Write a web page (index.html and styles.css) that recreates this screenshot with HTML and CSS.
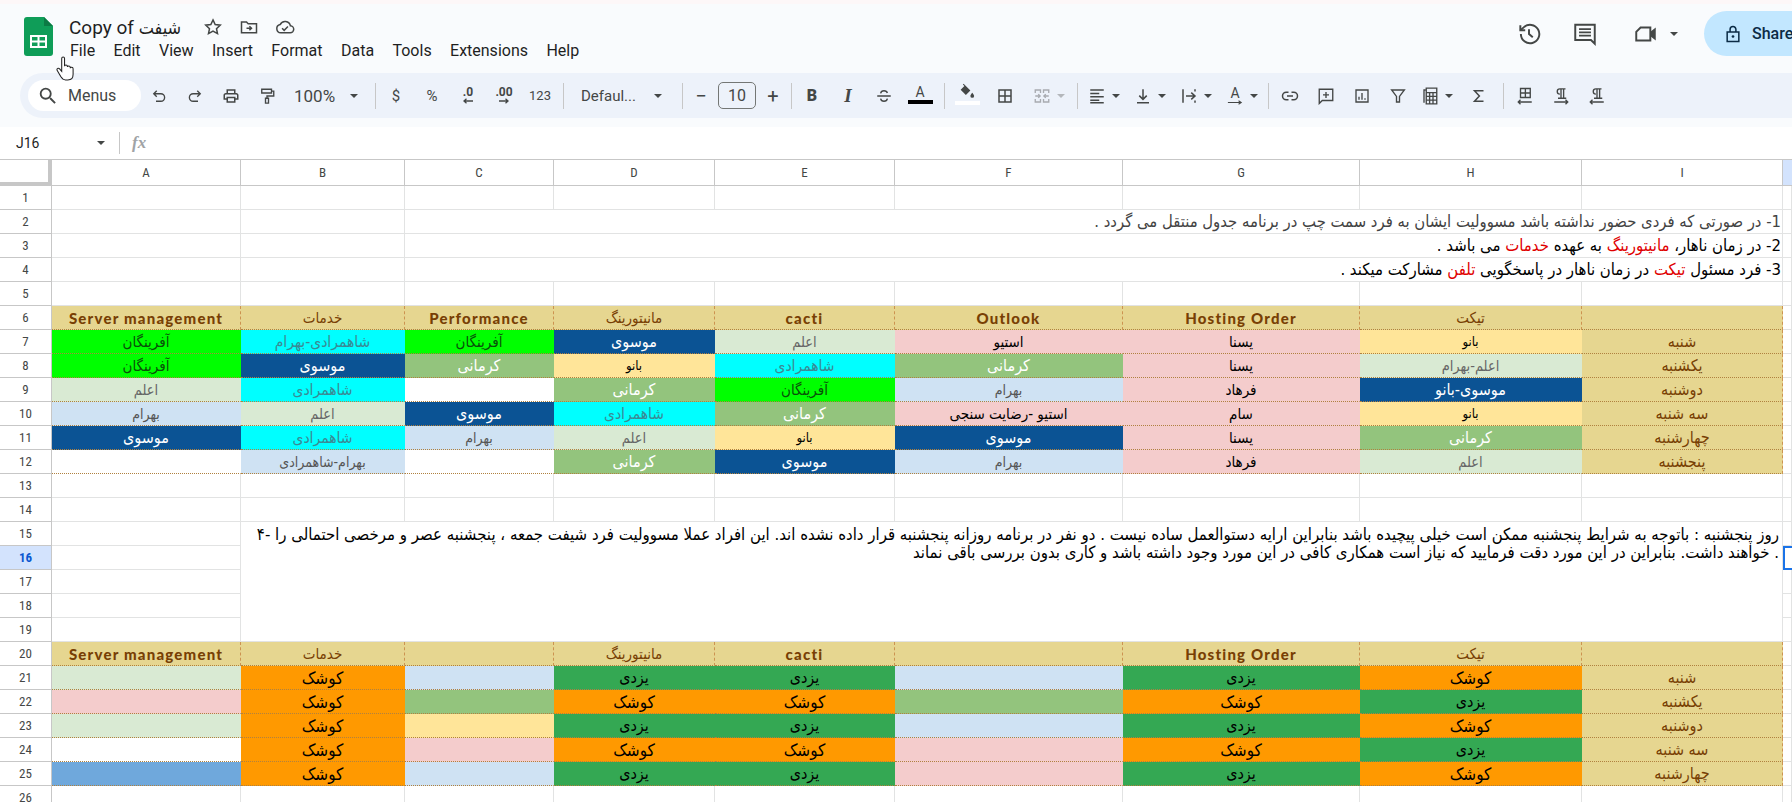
FILE: index.html
```html
<!DOCTYPE html>
<html lang="fa">
<head>
  <meta charset="UTF-8" />
  <title>Copy of شیفت</title>
  <link rel="stylesheet" href="styles.css">
</head>
<body>
  <!-- HEADER -->
  <header class="topbar">
    <svg class="logo" viewBox="0 0 29 39"><path d="M3 0h17l9 9v27a3 3 0 0 1-3 3H3a3 3 0 0 1-3-3V3a3 3 0 0 1 3-3z" fill="#0f9d58"/><path d="M20 0l9 9h-9z" fill="#0b7a44"/><path d="M6 18h17v13H6zm2 2v3.500h5.500V20zm7.500 0v3.500H21V20zM8 25.500V29h5.500v-3.500zm7.500 0V29H21v-3.500z" fill="#fff" fill-rule="evenodd"/></svg>
    <div class="doc-info">
      <div class="title-row">
        <span class="doc-title">Copy of <span class="fa">شیفت</span></span>
        <svg class="ic title-ic" viewBox="0 0 24 24"><path class="st" d="M12 3.500l2.600 5.600 6.100.7-4.500 4.200 1.200 6-5.400-3-5.400 3 1.200-6-4.500-4.200 6.100-.7z"/></svg>
        <svg class="ic title-ic" viewBox="0 0 24 24"><path class="st" d="M3 6h6l2 2h10v11H3z"/><path class="st" d="M9 13.500h6M12.500 11l2.500 2.500-2.500 2.500"/></svg>
        <svg class="ic title-ic" viewBox="0 0 24 24"><path class="st" d="M7 19a5 5 0 0 1-.8-9.900 6.500 6.500 0 0 1 12.300 1.500A4.200 4.200 0 0 1 18 19z"/><path class="st" d="M8.500 13.500l2.500 2.500 4.500-4.500"/></svg>
      </div>
      <nav class="menu">
        <span>File</span><span>Edit</span><span>View</span><span>Insert</span><span>Format</span><span>Data</span><span>Tools</span><span>Extensions</span><span>Help</span>
      </nav>
    </div>
    <div class="top-actions">
      <svg class="ic top-ic" viewBox="0 0 24 24"><path class="st" d="M4.500 12a8.500 8.500 0 1 0 2.600-6.100L4 8.500"/><path class="st" d="M4 4v4.500h4.500M12 7.500V12l3.500 3"/></svg>
      <svg class="ic top-ic cm" viewBox="0 0 24 24"><path class="st" d="M3 3.500h18V21l-3.500-3.500H3z"/><path class="st" d="M6.500 7.500h11M6.500 10.500h11M6.500 13.500h11"/></svg>
      <span class="meet">
        <svg class="ic top-ic" viewBox="0 0 24 24"><path class="st" d="M7 6h9v12H3v-8z"/><path d="M16 10l5-4v12l-5-4z" fill="#444746"/></svg>
        <i class="caret"></i>
      </span>
      <div class="share">
        <svg class="ic lock" viewBox="0 0 24 24"><path class="st" d="M5 9.500h14V21H5zM8.500 9.500V6.500a3.500 3.500 0 0 1 7 0v3"/><circle cx="12" cy="15" r="1.600" fill="#0b2b45"/></svg>
        <span>Share</span>
      </div>
    </div>
  </header>

  <!-- TOOLBAR -->
  <div class="toolbar">
    <div class="menus-search">
      <svg class="ic" viewBox="0 0 24 24"><path d="M15.500 14h-.79l-.28-.27A6.470 6.470 0 0 0 16 9.500 6.500 6.500 0 1 0 9.500 16c1.610 0 3.090-.59 4.230-1.570l.27.28v.79l5 4.990L20.490 19l-4.990-5zm-6 0C7.010 14 5 11.990 5 9.500S7.010 5 9.500 5 14 7.010 14 9.500 11.990 14 9.500 14z"/></svg>
      <span>Menus</span>
    </div>
    <span class="tb"><svg class="ic" viewBox="0 0 24 24"><path class="st" d="M9 5L5 9l4 4M5 9h9.500a5 5 0 0 1 0 10H8"/></svg></span>
    <span class="tb"><svg class="ic" viewBox="0 0 24 24"><path class="st" d="M15 5l4 4-4 4M19 9H9.500a5 5 0 0 0 0 10H16"/></svg></span>
    <span class="tb"><svg class="ic" viewBox="0 0 24 24"><path d="M19 8h-1V3H6v5H5c-1.660 0-3 1.340-3 3v6h4v4h12v-4h4v-6c0-1.660-1.340-3-3-3zM8 5h8v3H8V5zm8 12v2H8v-4h8v2zm2-2v-2H6v2H4v-4c0-.55.45-1 1-1h14c.55 0 1 .45 1 1v4h-2z"/></svg></span>
    <span class="tb"><svg class="ic" viewBox="0 0 24 24"><path class="st" d="M5 3h13v5H5zM18 5.500h3V12h-9v3"/><path class="st" d="M10 15h4v6.500h-4z"/></svg></span>
    <span class="zoom-box"><span>100%</span><i class="caret"></i></span>
    <i class="sep sep-a"></i>
    <span class="tb txt">$</span>
    <span class="tb txt">%</span>
    <span class="tb dec">.0<svg viewBox="0 0 12 6"><path class="st" d="M11 3H2M4.500 .8L2 3l2.500 2.200"/></svg></span>
    <span class="tb dec">.00<svg viewBox="0 0 12 6"><path class="st" d="M1 3h9M7.500 .8L10 3 7.500 5.200"/></svg></span>
    <span class="tb txt small">123</span>
    <i class="sep sep-b"></i>
    <span class="font-box"><span>Defaul...</span><i class="caret"></i></span>
    <i class="sep sep-c"></i>
    <span class="tb step">−</span>
    <span class="size-box">10</span>
    <span class="tb step">+</span>
    <i class="sep sep-d"></i>
    <span class="tb fmt"><b>B</b></span>
    <span class="tb fmt"><b class="it">I</b></span>
    <span class="tb"><svg class="ic" viewBox="0 0 24 24"><path class="st" d="M3 12h18M7.500 8.500C8 6 10 5 12 5s4 1 4.500 3M7.500 15.500C8 18 10 19 12 19s4-1 4.500-3.500"/></svg></span>
    <span class="tb colr"><span class="colr-a">A</span><i class="bar"></i></span>
    <i class="sep sep-e"></i>
    <span class="tb wide colr"><svg class="ic fill-ic" viewBox="0 0 24 24"><path d="M7.500 1l9 9-6 6-7-7 5-5-2-2zM19 13s2.500 2.800 2.500 4.300a2.500 2.500 0 0 1-5 0C16.500 15.800 19 13 19 13z"/></svg><i class="bar white"></i></span>
    <span class="tb wide"><svg class="ic" viewBox="0 0 24 24"><path class="st thick" d="M4 4h16v16H4zM12 4v16M4 12h16"/></svg></span>
    <span class="tb merge"><svg class="ic" viewBox="0 0 24 24"><path class="st dim" d="M3 8V4h7v4M3 16v4h7v-4M14 8V4h7v4M14 16v4h7v-4M3 12h6M7 9.500L9.500 12 7 14.500M21 12h-6M17 9.500L14.500 12l2.500 2.500"/></svg><i class="caret dim-caret"></i></span>
    <i class="sep sep-f"></i>
    <span class="tb cr"><svg class="ic" viewBox="0 0 24 24"><path class="st thick" d="M3 4h18M3 8.500h12M3 13h18M3 17.500h12M3 21h18"/></svg><i class="caret"></i></span>
    <span class="tb cr"><svg class="ic" viewBox="0 0 24 24"><path class="st thick" d="M12 3v13M7 11.500l5 5 5-5M4 21h16"/></svg><i class="caret"></i></span>
    <span class="tb cr"><svg class="ic" viewBox="0 0 24 24"><path class="st thick" d="M4 3v18M20 3v3M20 18v3M8 12h12M15 7.500l5 4.500-5 4.500"/></svg><i class="caret"></i></span>
    <span class="tb cr"><span class="rot">A<svg viewBox="0 0 18 5"><path class="st" d="M1 2.500h15M13 .5l3 2-3 2"/></svg></span><i class="caret"></i></span>
    <i class="sep sep-g"></i>
    <span class="tb"><svg class="ic" viewBox="0 0 24 24"><path class="st thick" d="M10 7H7a5 5 0 0 0 0 10h3M14 7h3a5 5 0 0 1 0 10h-3M8 12h8"/></svg></span>
    <span class="tb"><svg class="ic" viewBox="0 0 24 24"><path class="st" d="M3 3h18v15H7l-4 4z"/><path class="st" d="M12 6.500v8M8 10.500h8"/></svg></span>
    <span class="tb"><svg class="ic" viewBox="0 0 24 24"><path class="st" d="M4 4h16v16H4zM8 17v-4M12 17V8M16 17v-2"/></svg></span>
    <span class="tb"><svg class="ic" viewBox="0 0 24 24"><path class="st" d="M3.500 4h17L14 12.500V20h-4v-7.500z"/></svg></span>
    <span class="tb calc"><svg class="ic" viewBox="0 0 24 24"><path class="st" d="M4 21V4h2M7 1.500h14V22.500H7zM7 7.500h14M7 12.500h14M7 17.500h14M11.500 7.500v15M16 7.500v15" /></svg><i class="caret"></i></span>
    <span class="tb"><svg class="ic" viewBox="0 0 24 24"><path class="st thick" d="M18 5H6l6.500 7L6 19h12"/></svg></span>
    <i class="sep sep-h"></i>
    <span class="tb"><svg class="ic" viewBox="0 0 24 24"><path class="st" d="M6 2h13v12H6zM12.500 2v12M6 8h13M21 20H3M6 17l-3 3 3 3"/></svg></span>
    <span class="tb"><svg class="ic" viewBox="0 0 24 24"><path class="st" d="M10.500 9.500a3.500 3.500 0 0 1 0-7H18M12 2.500V15M15.500 2.500V15M8 15h11M3 20h18M18 17l3 3-3 3"/></svg></span>
    <span class="tb"><svg class="ic" viewBox="0 0 24 24"><path class="st" d="M10.500 9.500a3.500 3.500 0 0 1 0-7H18M12 2.500V15M15.500 2.500V15M8 15h11M21 20H3M6 17l-3 3 3 3"/></svg></span>
  </div>

  <!-- FORMULA BAR -->
  <div class="formula-bar">
    <span class="name-box">J16</span>
    <i class="caret"></i>
    <i class="sep sep-fx"></i>
    <span class="fx">fx</span>
  </div>

  <!-- SHEET -->
  <div class="sheet">
    <div class="corner"></div>
    <div class="col">A</div><div class="col">B</div><div class="col">C</div><div class="col">D</div><div class="col">E</div><div class="col">F</div><div class="col">G</div><div class="col">H</div><div class="col">I</div><div class="col sel-col"></div>

    <div class="row">1</div><div class="c"></div><div class="c"></div><div class="c"></div><div class="c"></div><div class="c"></div><div class="c"></div><div class="c"></div><div class="c"></div><div class="c"></div><div class="c"></div>

    <div class="row">2</div><div class="c"></div><div class="c"></div>
    <div class="c note gray" dir="rtl"><span>1- در صورتی که فردی حضور نداشته باشد مسوولیت ایشان به فرد سمت چپ در برنامه جدول منتقل می گردد .</span></div>
    <div class="c"></div>

    <div class="row">3</div><div class="c"></div><div class="c"></div>
    <div class="c note" dir="rtl"><span>2- در زمان ناهار، <span class="red">مانیتورینگ</span> به عهده <span class="red">خدمات</span> می باشد .</span></div>
    <div class="c"></div>

    <div class="row">4</div><div class="c"></div><div class="c"></div>
    <div class="c note" dir="rtl"><span>3- فرد مسئول <span class="red">تیکت</span> در زمان ناهار در پاسخگویی <span class="red">تلفن</span> مشارکت میکند .</span></div>
    <div class="c"></div>

    <div class="row">5</div><div class="c"></div><div class="c"></div><div class="c"></div><div class="c"></div><div class="c"></div><div class="c"></div><div class="c"></div><div class="c"></div><div class="c"></div><div class="c"></div>

    <div class="row">6</div>
    <div class="d hd en">Server management</div><div class="d hd">خدمات</div><div class="d hd en">Performance</div><div class="d hd">مانیتورینگ</div><div class="d hd en">cacti</div><div class="d hd en">Outlook</div><div class="d hd en">Hosting Order</div><div class="d hd">تیکت</div><div class="d hd"></div><div class="c"></div>

    <div class="row">7</div>
    <div class="d lime">آفرینگان</div><div class="d cyan">شاهمرادی-بهرام</div><div class="d lime">آفرینگان</div><div class="d navy">موسوی</div><div class="d sage">اعلم</div><div class="d pink">استیو</div><div class="d pink">یسنا</div><div class="d sand">بانو</div><div class="d hd day">شنبه</div><div class="c"></div>

    <div class="row">8</div>
    <div class="d lime">آفرینگان</div><div class="d navy">موسوی</div><div class="d leaf">کرمانی</div><div class="d sand">بانو</div><div class="d cyan">شاهمرادی</div><div class="d leaf">کرمانی</div><div class="d pink">یسنا</div><div class="d sage">اعلم-بهرام</div><div class="d hd day">یکشنبه</div><div class="c"></div>

    <div class="row">9</div>
    <div class="d sage">اعلم</div><div class="d cyan">شاهمرادی</div><div class="d"></div><div class="d leaf">کرمانی</div><div class="d lime">آفرینگان</div><div class="d sky">بهرام</div><div class="d pink">فرهاد</div><div class="d navy">موسوی-بانو</div><div class="d hd day">دوشنبه</div><div class="c"></div>

    <div class="row">10</div>
    <div class="d sky">بهرام</div><div class="d sage">اعلم</div><div class="d navy">موسوی</div><div class="d cyan">شاهمرادی</div><div class="d leaf">کرمانی</div><div class="d pink">استیو -رضایت سنجی</div><div class="d pink">سام</div><div class="d sand">بانو</div><div class="d hd day">سه شنبه</div><div class="c"></div>

    <div class="row">11</div>
    <div class="d navy">موسوی</div><div class="d cyan">شاهمرادی</div><div class="d sky">بهرام</div><div class="d sage">اعلم</div><div class="d sand">بانو</div><div class="d navy">موسوی</div><div class="d pink">یسنا</div><div class="d leaf">کرمانی</div><div class="d hd day">چهارشنبه</div><div class="c"></div>

    <div class="row">12</div>
    <div class="d"></div><div class="d sky">بهرام-شاهمرادی</div><div class="d"></div><div class="d leaf">کرمانی</div><div class="d navy">موسوی</div><div class="d sky">بهرام</div><div class="d pink">فرهاد</div><div class="d sage">اعلم</div><div class="d hd day">پنجشنبه</div><div class="c"></div>

    <div class="row">13</div><div class="c"></div><div class="c"></div><div class="c"></div><div class="c"></div><div class="c"></div><div class="c"></div><div class="c"></div><div class="c"></div><div class="c"></div><div class="c"></div>
    <div class="row">14</div><div class="c"></div><div class="c"></div><div class="c"></div><div class="c"></div><div class="c"></div><div class="c"></div><div class="c"></div><div class="c"></div><div class="c"></div><div class="c"></div>

    <div class="row">15</div><div class="c"></div>
    <div class="c long-note" dir="rtl">
      <div>روز پنجشنبه : باتوجه به شرایط پنجشنبه ممکن است خیلی پیچیده باشد بنابراین ارایه دستوالعمل ساده نیست . دو نفر در برنامه روزانه پنجشنبه قرار داده نشده اند. این افراد عملا مسوولیت فرد شیفت جمعه ، پنجشنبه عصر و مرخصی احتمالی را -۴</div>
      <div>. خواهند داشت. بنابراین در این مورد دقت فرمایید که نیاز است همکاری کافی در این مورد وجود داشته باشد و کاری بدون بررسی باقی نماند</div>
    </div>
    <div class="c"></div>
    <div class="row sel-row">16</div><div class="c"></div><div class="c sel-cell"></div>
    <div class="row">17</div><div class="c"></div><div class="c"></div>
    <div class="row">18</div><div class="c"></div><div class="c"></div>
    <div class="row">19</div><div class="c"></div><div class="c"></div>

    <div class="row">20</div>
    <div class="d hd en">Server management</div><div class="d hd">خدمات</div><div class="d hd"></div><div class="d hd">مانیتورینگ</div><div class="d hd en">cacti</div><div class="d hd"></div><div class="d hd en">Hosting Order</div><div class="d hd">تیکت</div><div class="d hd"></div><div class="c"></div>

    <div class="row">21</div>
    <div class="d sage"></div><div class="d orange">کوشک</div><div class="d sky"></div><div class="d green">یزدی</div><div class="d green">یزدی</div><div class="d sky"></div><div class="d green">یزدی</div><div class="d orange">کوشک</div><div class="d hd day">شنبه</div><div class="c"></div>

    <div class="row">22</div>
    <div class="d pink"></div><div class="d orange">کوشک</div><div class="d leaf"></div><div class="d orange">کوشک</div><div class="d orange">کوشک</div><div class="d leaf"></div><div class="d orange">کوشک</div><div class="d green">یزدی</div><div class="d hd day">یکشنبه</div><div class="c"></div>

    <div class="row">23</div>
    <div class="d sage"></div><div class="d orange">کوشک</div><div class="d sand"></div><div class="d green">یزدی</div><div class="d green">یزدی</div><div class="d sky"></div><div class="d green">یزدی</div><div class="d orange">کوشک</div><div class="d hd day">دوشنبه</div><div class="c"></div>

    <div class="row">24</div>
    <div class="d"></div><div class="d orange">کوشک</div><div class="d pink"></div><div class="d orange">کوشک</div><div class="d orange">کوشک</div><div class="d pink"></div><div class="d orange">کوشک</div><div class="d green">یزدی</div><div class="d hd day">سه شنبه</div><div class="c"></div>

    <div class="row">25</div>
    <div class="d blue"></div><div class="d orange">کوشک</div><div class="d sky"></div><div class="d green">یزدی</div><div class="d green">یزدی</div><div class="d pink"></div><div class="d green">یزدی</div><div class="d orange">کوشک</div><div class="d hd day">چهارشنبه</div><div class="c"></div>

    <div class="row">26</div><div class="c"></div><div class="c"></div><div class="c"></div><div class="c"></div><div class="c"></div><div class="c"></div><div class="c"></div><div class="c"></div><div class="c"></div><div class="c"></div>
  </div>

  <!-- курсор поверх страницы -->
  <svg class="hand" viewBox="0 0 20 26"><path d="M6 2.500c0-2 3-2 3 0v8c0-1.600 3-1.600 3 0v1c0-1.500 3-1.500 3 .2v1c0-1.500 3-1.200 3 .5V19c0 3.500-2 6-5.500 6H10c-2.500 0-3.800-1.500-5-3.500L1.300 15c-1-1.800 1.200-3.200 2.500-1.600L6 16z" fill="#fff" stroke="#222" stroke-width="1.100"/></svg>
</body>
</html>
```
FILE: styles.css
```css
* {
  box-sizing: border-box;
}
html, body {
  height: 802px;
  overflow: hidden;
}
body {
  margin: 0;
  background-color: #f9fbfd;
  color: #1f1f1f;
  font-family: Roboto, "DejaVu Sans", sans-serif;
  position: relative;
}
i {
  font-style: normal;
}

/* Шапка */
.topbar {
  display: flex;
  height: 73px;
  padding-left: 24px;
  border-top: 4px solid #fdf7f8;
  position: relative;
}
.logo {
  width: 29px;
  height: 39px;
  margin-top: 13px;
}
.doc-info {
  margin-left: 16px;
}
.title-row {
  display: flex;
  align-items: center;
  height: 28px;
  margin-top: 9px;
}
.doc-title {
  font-size: 19px;
  color: #1f1f1f;
  width: 134px;
}
.fa {
  font-family: "DejaVu Sans", sans-serif;
  font-stretch: condensed;
  font-size: 18px;
}
.ic {
  width: 18px;
  height: 18px;
  fill: #444746;
  flex: none;
}
.st {
  fill: none;
  stroke: #444746;
  stroke-width: 1.8;
}
.thick {
  stroke-width: 2;
}
.dim {
  stroke: #a8abb0;
}
.title-ic {
  width: 20px;
  height: 20px;
  margin-right: 16px;
}
.menu {
  display: flex;
  gap: 18.400px;
  font-size: 16px;
  color: #1f1f1f;
  margin-left: 1px;
}
.top-actions {
  display: flex;
  align-items: center;
  margin-left: auto;
  height: 45px;
  margin-top: 7px;
}
.top-ic {
  width: 26px;
  height: 26px;
  margin-right: 30px;
}
.top-ic.cm {
  margin-right: 35px;
}
.meet {
  display: flex;
  align-items: center;
  margin-right: 26px;
}
.meet .top-ic {
  margin-right: 11px;
}
.share {
  display: flex;
  align-items: center;
  gap: 9px;
  width: 120px;
  height: 45px;
  margin-right: -32px;
  padding-left: 19px;
  border-radius: 23px;
  background-color: #c2e7ff;
  color: #0b2b45;
  font-size: 16px;
  font-weight: 500;
}
.lock {
  width: 20px;
  height: 20px;
}
.lock .st {
  stroke: #0b2b45;
}
.caret {
  display: inline-block;
  width: 0;
  height: 0;
  flex: none;
  border-left: 4px solid transparent;
  border-right: 4px solid transparent;
  border-top: 4px solid #444746;
}
.dim-caret {
  border-top-color: #b4b7bb;
}

/* Панель инструментов */
.toolbar {
  display: flex;
  align-items: center;
  height: 45px;
  margin-left: 20px;
  padding-left: 8px;
  background-color: #edf2fa;
  border-radius: 23px 0 0 23px;
  color: #444746;
}
.menus-search {
  display: flex;
  align-items: center;
  gap: 9px;
  width: 113px;
  height: 31px;
  padding-left: 9px;
  background-color: #fff;
  border-radius: 16px;
  font-size: 16px;
  flex: none;
}
.menus-search .ic {
  width: 22px;
  height: 22px;
}
.tb {
  display: flex;
  align-items: center;
  justify-content: center;
  width: 36px;
  height: 30px;
  flex: none;
  font-size: 14px;
}
.tb .ic {
  width: 18px;
  height: 18px;
}
.txt {
  font-size: 15px;
}
.small {
  font-size: 13px;
}
.dec {
  flex-direction: column;
  font-size: 12px;
  font-weight: 700;
  line-height: 11px;
}
.dec svg {
  width: 12px;
  height: 6px;
}
.dec .st {
  stroke-width: 1.300;
}
.zoom-box {
  display: flex;
  align-items: center;
  width: 82px;
  padding-left: 9px;
  gap: 15px;
  font-size: 17px;
  flex: none;
}
.font-box {
  display: flex;
  align-items: center;
  width: 100px;
  padding-left: 9px;
  gap: 18px;
  font-size: 15px;
  flex: none;
}
.size-box {
  width: 38px;
  height: 27px;
  line-height: 25px;
  text-align: center;
  border: 1px solid #747775;
  border-radius: 5px;
  font-size: 16px;
  flex: none;
}
.step {
  width: 34px;
  font-size: 20px;
}
.fmt {
  font-size: 16px;
}
.fmt b {
  font-weight: 900;
}
.fmt .it {
  font-family: "Liberation Serif", serif;
  font-style: italic;
  font-weight: 700;
  font-size: 19px;
}
.colr {
  flex-direction: column;
  position: relative;
}
.colr-a {
  font-size: 14px;
  line-height: 14px;
  margin-top: -2px;
}
.bar {
  width: 25px;
  height: 4px;
  background-color: #000;
  margin-top: 1px;
}
.bar.white {
  background-color: #fff;
  margin-top: 0;
}
.fill-ic {
  margin-top: -3px;
}
.wide {
  width: 38px;
}
.merge {
  width: 48px;
  justify-content: flex-start;
  padding-left: 9px;
  gap: 6px;
}
.cr {
  width: 46px;
  justify-content: flex-start;
  padding-left: 8px;
  gap: 6px;
}
.calc {
  width: 45px;
  justify-content: flex-start;
  padding-left: 5px;
  gap: 6px;
}
.rot {
  display: flex;
  flex-direction: column;
  align-items: center;
  width: 18px;
  font-size: 14px;
  line-height: 13px;
}
.rot svg {
  width: 16px;
  height: 5px;
}
.rot .st {
  stroke-width: 1.200;
}
.sep {
  display: block;
  width: 1px;
  height: 26px;
  background-color: #c7c7c7;
  flex: none;
}
.sep-a { margin: 0 2px 0 8px; }
.sep-b { margin: 0 8px 0 5px; }
.sep-c { margin: 0 1px 0 10px; }
.sep-d { margin: 0 2px 0 1px; }
.sep-e { margin: 0 3px 0 6px; }
.sep-f { margin: 0 2px 0 5px; }
.sep-g { margin: 0 3px 0 4px; }
.sep-h { margin: 0 3px 0 6px; }

/* Строка формул */
.formula-bar {
  display: flex;
  align-items: center;
  height: 32px;
  margin-top: 9px;
  padding-left: 16px;
  background-color: #fff;
  font-size: 14px;
  color: #1f1f1f;
}
.name-box {
  width: 81px;
}
.sep-fx {
  height: 22px;
  margin: 0 12px 0 14px;
}
.fx {
  font-family: "Liberation Serif", serif;
  font-style: italic;
  font-weight: 700;
  font-size: 17px;
  color: #a0a3a6;
}

/* Таблица */
.sheet {
  display: grid;
  grid-template-columns: 52px 189px 164px 149px 161px 180px 228px 237px 222px 201px 9px;
  grid-template-rows: 27px;
  grid-auto-rows: 24px;
  background-color: #fff;
  font-family: "DejaVu Sans", sans-serif;
  font-stretch: condensed;
  font-size: 12px;
}
.corner {
  border-top: 1px solid #c7c7c7;
  border-right: 4px solid #c7c7c7;
  border-bottom: 4px solid #c7c7c7;
  background-color: #fff;
}
.col {
  display: flex;
  align-items: center;
  justify-content: center;
  border-top: 1px solid #c7c7c7;
  border-right: 1px solid #c7c7c7;
  border-bottom: 1px solid #c7c7c7;
  font-family: Roboto, sans-serif;
  font-size: 13px;
  color: #444746;
}
.sel-col {
  background-color: #d3e3fd;
  border-right: none;
}
.row {
  display: flex;
  align-items: center;
  justify-content: center;
  border-right: 1px solid #c7c7c7;
  border-bottom: 1px solid #c7c7c7;
  font-family: Roboto, sans-serif;
  font-size: 13px;
  color: #444746;
}
.sel-row {
  background-color: #d3e3fd;
  color: #0b57d0;
  font-weight: 700;
}
.c {
  border-right: 1px solid #e2e3e3;
  border-bottom: 1px solid #e2e3e3;
}
.sel-cell {
  grid-column: 11;
  border: 2px solid #1a73e8;
  border-right: none;
}
.note {
  grid-column: span 7;
  display: flex;
  align-items: center;
  padding-right: 1px;
  font-size: 16.600px;
  color: #000;
  white-space: nowrap;
}
.gray {
  color: #434343;
  font-size: 16.500px;
}
.red {
  color: #e00000;
}
.long-note {
  grid-column: span 8;
  grid-row: span 5;
  padding: 4px 3px 0 0;
  font-size: 16.650px;
  line-height: 18px;
  color: #000;
  white-space: nowrap;
  overflow: hidden;
}

/* Ячейки расписания */
.d {
  display: flex;
  align-items: center;
  justify-content: center;
  background-color: #fff;
  border-right: 1px solid transparent;
  border-bottom: 1px dotted #b0813f;
  font-size: 15px;
  color: #000;
}
.hd {
  background-color: #e6d690;
  color: #783f04;
  border-right: 1px dashed #cc9350;
  border-bottom: 1px dotted #b0813f;
  font-size: 15px;
}
.en {
  font-family: Lato, sans-serif;
  font-weight: 900;
  font-size: 15px;
  letter-spacing: 1.200px;
}
.day {
  font-size: 16px;
}
.lime { background-color: #00ff00; color: #0a4f0a; }
.cyan { background-color: #00ffff; color: #3a8a94; font-size: 15.500px; }
.navy { background-color: #0b5394; color: #fff; font-size: 16px; }
.sage { background-color: #d9ead3; color: #666; font-size: 14.500px; }
.pink { background-color: #f4cccc; color: #000; }
.sand { background-color: #ffe599; color: #000; font-size: 13px; }
.leaf { background-color: #93c47d; color: #fff; font-size: 16px; }
.sky { background-color: #cfe2f3; color: #555; font-size: 14px; }
.orange { background-color: #ff9900; color: #000; font-size: 17px; }
.green { background-color: #34a853; color: #000; font-size: 16px; }
.blue { background-color: #6fa8dc; }

/* Курсор */
.hand {
  position: absolute;
  left: 56px;
  top: 56px;
  width: 19px;
  height: 25px;
}
```
